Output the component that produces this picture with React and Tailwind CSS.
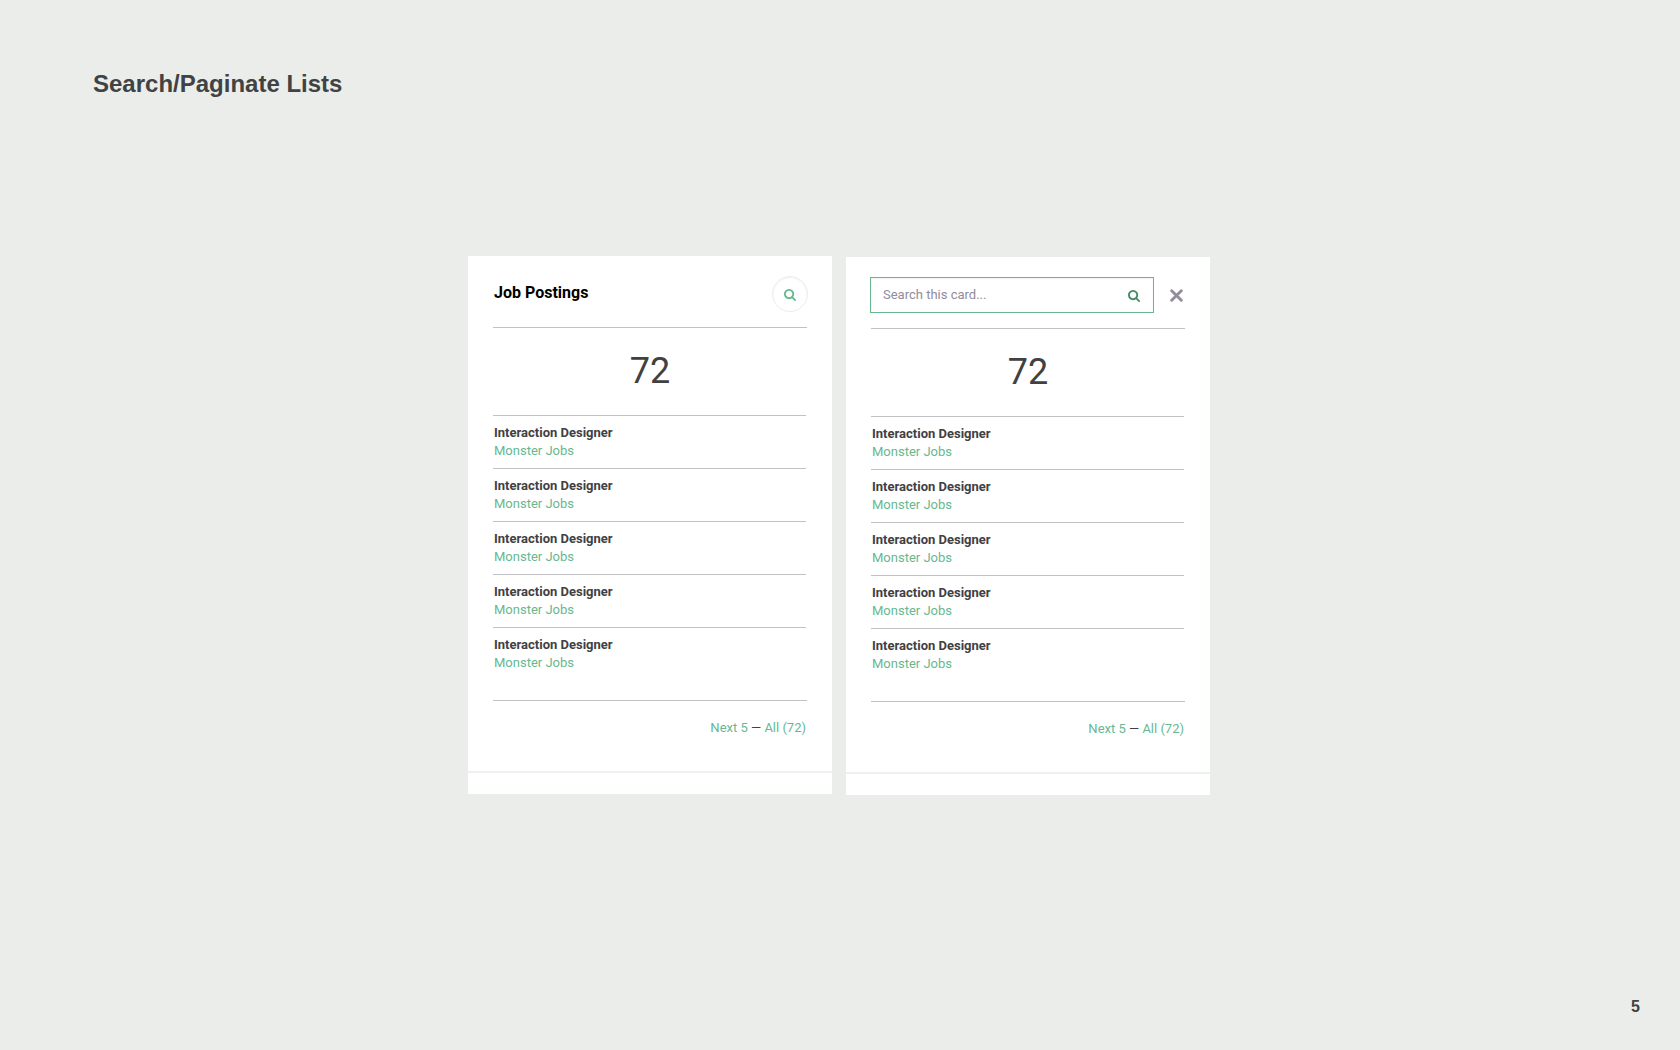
import React from "react";

function SearchIcon({ className }) {
  return (
    <svg viewBox="0 128 1664 1664" className={className} fill="currentColor" aria-hidden="true">
      <path d="M1152 832q0-185-131.500-316.500t-316.500-131.500-316.500 131.500-131.500 316.500 131.500 316.500 316.500 131.500 316.500-131.500 131.500-316.500zm512 832q0 52-38 90t-90 38q-54 0-90-38l-343-342q-179 124-399 124-143 0-273.500-55.500t-225-150-150-225-55.500-273.500 55.500-273.500 150-225 225-150 273.500-55.500 273.500 55.500 225 150 150 225 55.500 273.500q0 220-124 399l343 343q37 37 37 90z" />
    </svg>
  );
}

function CloseIcon({ className }) {
  return (
    <svg viewBox="0 0 13 13" className={className} fill="none" stroke="currentColor" strokeWidth="2.9" strokeLinecap="round" aria-hidden="true">
      <path d="M1.700 1.700L11.300 11.300M11.300 1.700L1.700 11.300" />
    </svg>
  );
}

const jobs = Array.from({ length: 5 }, () => ({
  title: "Interaction Designer",
  source: "Monster Jobs",
}));

function Card({ header, className }) {
  return (
    <section className={`w-full max-w-[364px] bg-white ${className}`}>
      <div className="px-6 pt-5 pb-[15px]">{header}</div>
      <div className="mx-[25px] border-t border-[#c1c1c6] py-5 text-center text-[36px] leading-[47px] text-[#414042]">
        72
      </div>
      <ul className="mr-[26px] ml-[25px] divide-y divide-[#c1c1c6] border-t border-[#c1c1c6] text-[13px] leading-[18px]">
        {jobs.map((job, i) => (
          <li key={i} className="py-2 pl-px">
            <p className="font-bold text-[#414042]">{job.title}</p>
            <a href="#" className="block text-[#67b890]">{job.source}</a>
          </li>
        ))}
      </ul>
      <div className="mx-[25px] mt-5 border-t border-[#c1c1c6] pt-[18px] pr-px pb-[34px] text-right text-[13px] leading-[18px] text-[#414042]">
        <a href="#" className="text-[#67b890]">Next 5</a> —{" "}
        <a href="#" className="text-[#67b890]">All (72)</a>
      </div>
      <div className="h-[23px] border-t-2 border-[#f0f0f0]" />
    </section>
  );
}

export default function App() {
  return (
    <main className="flex min-h-screen flex-col bg-[#ebedea] font-['Roboto',sans-serif]">
      <h1 className="px-[93px] pt-[70px] font-['Liberation_Sans',sans-serif] text-2xl leading-7 font-bold text-[#414243]">
        Search/Paginate Lists
      </h1>
      <div className="mt-[158px] flex items-start justify-center gap-3.5 pr-0.5">
        <Card
          className=""
          header={
            <div className="flex h-9 items-center justify-between pl-0.5">
              <h2 className="pb-[3px] text-base leading-5 font-bold text-black">Job Postings</h2>
              <button
                type="button"
                aria-label="Search job postings"
                className="flex size-9 items-center justify-center rounded-full border border-[#ededed] pt-px text-[#67b890] shadow-[inset_0_1px_2px_rgba(0,0,0,0.06)]"
              >
                <SearchIcon className="size-3" />
              </button>
            </div>
          }
        />
        <Card
          className="mt-px"
          header={
            <form className="flex h-9 items-center gap-3" onSubmit={(e) => e.preventDefault()}>
              <div className="flex h-9 min-w-0 flex-1 items-center border border-[#67b890] pr-[13px] pl-3 shadow-[inset_0_1px_2px_rgba(0,0,0,0.06)]">
                <input
                  type="text"
                  aria-label="Search this card"
                  placeholder="Search this card..."
                  className="min-w-0 flex-1 bg-transparent text-[13px] leading-[18px] text-[#414042] outline-none placeholder:text-[#928c9b]"
                />
                <button type="submit" aria-label="Search" className="flex pt-0.5 text-[#438a68]">
                  <SearchIcon className="size-3" />
                </button>
              </div>
              <button type="button" aria-label="Close search" className="flex w-5 justify-center pt-px text-[#928c9b]">
                <CloseIcon className="size-[13px]" />
              </button>
            </form>
          }
        />
      </div>
      <footer className="mt-auto pr-10 pb-[33px] text-right font-['Liberation_Sans',sans-serif] text-base leading-5 font-bold text-[#414243]">
        5
      </footer>
    </main>
  );
}
